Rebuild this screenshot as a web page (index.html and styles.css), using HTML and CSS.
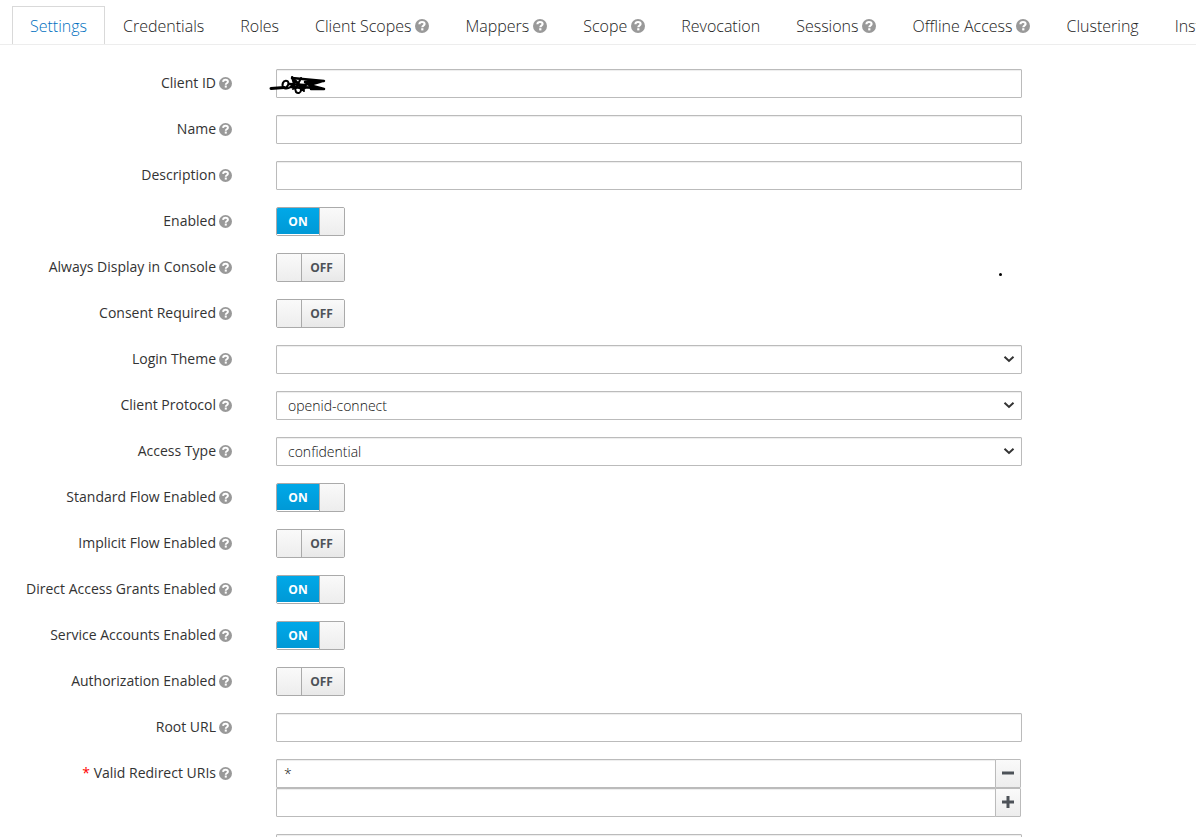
FILE: index.html
```html
<!DOCTYPE html>
<html lang="en">
<head>
<meta charset="utf-8">
<title>Client settings</title>
<link rel="stylesheet" href="styles.css">
</head>
<body>
<svg class="sprite" aria-hidden="true">
  <symbol id="help" viewBox="0 0 14 14">
    <circle cx="7" cy="7" r="7" fill="#999"/>
    <path d="M4.400 5.300C4.500 3.600 5.700 3 7 3c1.500 0 2.600.8 2.600 2.100 0 1.700-2.300 1.500-2.300 3.200" fill="none" stroke="#fff" stroke-width="2.100"/>
    <rect x="6.200" y="9.200" width="2.200" height="2.200" fill="#fff"/>
  </symbol>
  <symbol id="chevron" viewBox="0 0 12 8">
    <path d="M1.500 1.800L6 6l4.500-4.200" fill="none" stroke="#333" stroke-width="2"/>
  </symbol>
</svg>

<nav class="tabs">
  <a class="tab tab-active" href="#">Settings</a>
  <a class="tab" href="#">Credentials</a>
  <a class="tab" href="#">Roles</a>
  <a class="tab" href="#">Client Scopes<svg class="help"><use href="#help"/></svg></a>
  <a class="tab" href="#">Mappers<svg class="help"><use href="#help"/></svg></a>
  <a class="tab" href="#">Scope<svg class="help"><use href="#help"/></svg></a>
  <a class="tab" href="#">Revocation</a>
  <a class="tab" href="#">Sessions<svg class="help"><use href="#help"/></svg></a>
  <a class="tab" href="#">Offline Access<svg class="help"><use href="#help"/></svg></a>
  <a class="tab" href="#">Clustering</a>
  <a class="tab" href="#">Installation</a>
</nav>

<form class="form">
  <div class="row">
    <label class="label" for="clientId">Client ID<svg class="help"><use href="#help"/></svg></label>
    <div class="field">
      <input class="control" id="clientId" type="text">
      <svg class="scribble" viewBox="0 0 60 22" aria-hidden="true">
        <g fill="none" stroke="#000" stroke-linecap="round" stroke-linejoin="round">
          <path stroke-width="3" d="M2 15.500L15 14.500"/>
          <path stroke-width="2" d="M5 15h10c4 0 6-6 3-7-4-1-6 4-3 7 5 2 9-3 11-6l-3-5 4 15c2 2 5 1 5-2s-6-4-8-1M23 4l12 14M32 5l-5 10M26 7l9 9M40 8l-7 9"/>
          <path stroke-width="2.500" d="M23 5l32 3-19 1M20 11l15 1 19-4M22 14l14 1M54 8l-14 4 15 4-21-2M42 16l13 0"/>
        </g>
      </svg>
    </div>
  </div>
  <div class="row">
    <label class="label" for="name">Name<svg class="help"><use href="#help"/></svg></label>
    <div class="field"><input class="control" id="name" type="text"></div>
  </div>
  <div class="row">
    <label class="label" for="description">Description<svg class="help"><use href="#help"/></svg></label>
    <div class="field"><input class="control" id="description" type="text"></div>
  </div>
  <div class="row">
    <label class="label" for="enabled">Enabled<svg class="help"><use href="#help"/></svg></label>
    <div class="field"><span class="switch"><input class="switch-input" id="enabled" type="checkbox" checked><span class="switch-on">ON</span><span class="switch-knob"></span><span class="switch-off">OFF</span></span></div>
  </div>
  <div class="row">
    <label class="label" for="display">Always Display in Console<svg class="help"><use href="#help"/></svg></label>
    <div class="field"><span class="switch"><input class="switch-input" id="display" type="checkbox"><span class="switch-on">ON</span><span class="switch-knob"></span><span class="switch-off">OFF</span></span><span class="dot"></span></div>
  </div>
  <div class="row">
    <label class="label" for="consent">Consent Required<svg class="help"><use href="#help"/></svg></label>
    <div class="field"><span class="switch"><input class="switch-input" id="consent" type="checkbox"><span class="switch-on">ON</span><span class="switch-knob"></span><span class="switch-off">OFF</span></span></div>
  </div>
  <div class="row">
    <label class="label" for="theme">Login Theme<svg class="help"><use href="#help"/></svg></label>
    <div class="field"><select class="control select" id="theme"><option></option></select><svg class="chevron"><use href="#chevron"/></svg></div>
  </div>
  <div class="row">
    <label class="label" for="protocol">Client Protocol<svg class="help"><use href="#help"/></svg></label>
    <div class="field"><select class="control select" id="protocol"><option>openid-connect</option></select><svg class="chevron"><use href="#chevron"/></svg></div>
  </div>
  <div class="row">
    <label class="label" for="access">Access Type<svg class="help"><use href="#help"/></svg></label>
    <div class="field"><select class="control select" id="access"><option>confidential</option></select><svg class="chevron"><use href="#chevron"/></svg></div>
  </div>
  <div class="row">
    <label class="label" for="standard">Standard Flow Enabled<svg class="help"><use href="#help"/></svg></label>
    <div class="field"><span class="switch"><input class="switch-input" id="standard" type="checkbox" checked><span class="switch-on">ON</span><span class="switch-knob"></span><span class="switch-off">OFF</span></span></div>
  </div>
  <div class="row">
    <label class="label" for="implicit">Implicit Flow Enabled<svg class="help"><use href="#help"/></svg></label>
    <div class="field"><span class="switch"><input class="switch-input" id="implicit" type="checkbox"><span class="switch-on">ON</span><span class="switch-knob"></span><span class="switch-off">OFF</span></span></div>
  </div>
  <div class="row">
    <label class="label" for="direct">Direct Access Grants Enabled<svg class="help"><use href="#help"/></svg></label>
    <div class="field"><span class="switch"><input class="switch-input" id="direct" type="checkbox" checked><span class="switch-on">ON</span><span class="switch-knob"></span><span class="switch-off">OFF</span></span></div>
  </div>
  <div class="row">
    <label class="label" for="service">Service Accounts Enabled<svg class="help"><use href="#help"/></svg></label>
    <div class="field"><span class="switch"><input class="switch-input" id="service" type="checkbox" checked><span class="switch-on">ON</span><span class="switch-knob"></span><span class="switch-off">OFF</span></span></div>
  </div>
  <div class="row">
    <label class="label" for="authorization">Authorization Enabled<svg class="help"><use href="#help"/></svg></label>
    <div class="field"><span class="switch"><input class="switch-input" id="authorization" type="checkbox"><span class="switch-on">ON</span><span class="switch-knob"></span><span class="switch-off">OFF</span></span></div>
  </div>
  <div class="row">
    <label class="label" for="rootUrl">Root URL<svg class="help"><use href="#help"/></svg></label>
    <div class="field"><input class="control" id="rootUrl" type="text"></div>
  </div>
  <div class="row">
    <label class="label" for="redirect"><span class="required">*</span> Valid Redirect URIs<svg class="help"><use href="#help"/></svg></label>
    <div class="field">
      <div class="group">
        <input class="control" id="redirect" type="text" value="*">
        <button class="group-button" type="button" aria-label="Remove"><svg class="sign" viewBox="0 0 12 12"><path d="M0 6h12" stroke="#4d5258" stroke-width="3"/></svg></button>
      </div>
      <div class="group">
        <input class="control" type="text" aria-label="New redirect URI">
        <button class="group-button" type="button" aria-label="Add"><svg class="sign" viewBox="0 0 12 12"><path d="M0 6h12M6 0v12" stroke="#4d5258" stroke-width="3"/></svg></button>
      </div>
    </div>
  </div>
  <div class="row">
    <span class="label"></span>
    <div class="field"><input class="control" type="text" aria-label="Base URL"></div>
  </div>
</form>
</body>
</html>
```
FILE: styles.css
```css
* { box-sizing: border-box; }

html { height: 100%; overflow: hidden; }

body {
  height: 100%;
  margin: 0;
  overflow: hidden;
  background: #fff;
  color: #333;
  font: 14px/20px "Open Sans", sans-serif;
}

.sprite { display: none; }

.tabs {
  display: flex;
  margin-top: 6px;
  padding-left: 12px;
  border-bottom: 1px solid #ededed;
  overflow: hidden;
}

.tab {
  flex: none;
  padding: 9px 17px 8px;
  border: 1px solid transparent;
  border-bottom: 0;
  color: #222;
  font-size: 16px;
  font-weight: 300;
  text-decoration: none;
  white-space: nowrap;
}

.tab-active {
  border-color: #d9d9d9;
  color: #0070c0;
}

.help {
  width: 13px;
  height: 13px;
  margin-left: 3px;
  vertical-align: -2px;
}

.tab .help {
  width: 14px;
  height: 14px;
  margin-left: 4px;
  vertical-align: -1px;
}

.form { padding: 24px 174px 0 0; }

.row {
  display: grid;
  grid-template-columns: 232px minmax(0, 1fr);
  column-gap: 44px;
  margin-bottom: 17px;
}

.label {
  padding-top: 4px;
  font-weight: 500;
  text-align: right;
  white-space: nowrap;
}

.required { color: #f00; }

.field { position: relative; }

.control {
  display: block;
  width: 100%;
  height: 29px;
  margin: 0;
  padding: 2px 11px;
  border: 1px solid #bbb;
  border-radius: 1px;
  background: #fff;
  box-shadow: inset 0 1px 1px rgba(0, 0, 0, 0.075);
  color: #111;
  font: inherit;
  font-weight: 300;
}

.select { appearance: none; }

input.control {
  padding: 2px 7px;
}

.chevron {
  position: absolute;
  top: 10px;
  right: 7px;
  width: 12px;
  height: 8px;
  pointer-events: none;
}

.scribble {
  position: absolute;
  top: 4px;
  left: -7px;
  width: 60px;
  height: 22px;
  pointer-events: none;
}

.dot {
  position: absolute;
  top: 20px;
  right: 20px;
  width: 3px;
  height: 3px;
  border-radius: 50%;
  background: #000;
}

.switch {
  position: relative;
  display: flex;
  width: 69px;
  height: 29px;
  border: 1px solid #aaa;
  border-radius: 2px;
  overflow: hidden;
  font-size: 12px;
  font-weight: 700;
  line-height: 27px;
  text-align: center;
}

.switch-input {
  position: absolute;
  inset: 0;
  width: 100%;
  height: 100%;
  margin: 0;
  opacity: 0;
  cursor: pointer;
}

.switch-on {
  display: none;
  flex: 1;
  border-bottom: 1px solid #fff;
  background: linear-gradient(#00a8e8, #0099d6);
  color: #fff;
}

.switch-off {
  flex: 1;
  padding-right: 3px;
  background: linear-gradient(#fafafa, #e8e8e8);
  color: #4d5258;
}

.switch-knob {
  width: 25px;
  border-right: 1px solid #aaa;
  background: linear-gradient(#fafafa, #ededed);
}

.switch-input:checked ~ .switch-on { display: block; }

.switch-input:checked ~ .switch-off { display: none; }

.switch-input:checked ~ .switch-knob {
  border-right: 0;
  border-left: 1px solid #aaa;
}

.group {
  display: flex;
  padding-right: 1px;
}

.group-button {
  display: flex;
  flex: none;
  align-items: center;
  justify-content: center;
  width: 26px;
  height: 29px;
  margin-left: -1px;
  padding: 0 0 2px;
  border: 1px solid #bbb;
  border-radius: 0 1px 1px 0;
  background: linear-gradient(#fafafa, #ededed);
}

.sign {
  width: 12px;
  height: 12px;
}
```
